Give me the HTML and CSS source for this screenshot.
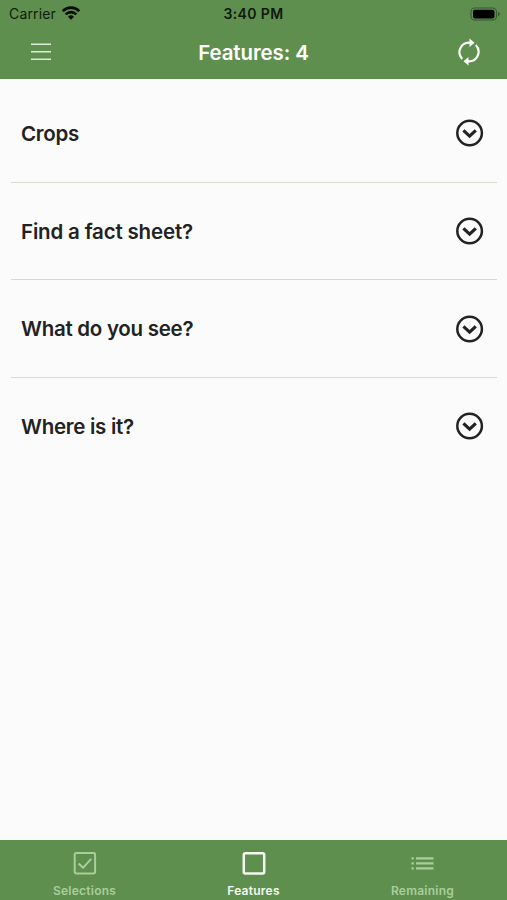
FILE: index.html
```html
<!DOCTYPE html>
<html lang="en">
<head>
<meta charset="utf-8">
<title>Features</title>
<link rel="stylesheet" href="styles.css">
</head>
<body>
<div class="app">
  <header class="header">
    <div class="status">
      <div class="carrier"><span class="carrier-name">Carrier</span>
        <svg class="wifi" width="20" height="14" viewBox="0 0 20 14" fill="none" stroke="#050a04" stroke-width="2.7">
          <path d="M1.7 5.1a11.8 11.8 0 0 1 16.6 0M4.7 8.4a7.5 7.5 0 0 1 10.6 0"/>
          <path d="M7 10.7a4.3 4.3 0 0 1 6 0L10 13.8z" fill="#050a04" stroke="none"/>
        </svg>
      </div>
      <div class="clock">3:40 PM</div>
      <svg class="battery" width="30" height="14" viewBox="0 0 30 14">
        <rect x="1" y="1" width="25.5" height="12" rx="3.8" fill="none" stroke="#36592d" stroke-width="1.1"/>
        <rect x="3" y="2.8" width="21.5" height="8.6" rx="2" fill="#000"/>
        <path d="M28 5v4.2q1.9-.7 1.9-2.1T28 5z" fill="#36592d"/>
      </svg>
    </div>
    <div class="nav">
      <svg class="menu" width="20" height="18" viewBox="0 0 20 18" stroke="#dcebd4" stroke-width="1.6"><path d="M0 1.3h20M0 8.8h20M0 16.2h20"/></svg>
      <h1 class="title">Features: 4</h1>
      <svg class="sync" width="22" height="28" viewBox="0 0 22 28" fill="none" stroke="#fff" stroke-width="2.1">
        <path d="M4.2 20.9A9.6 9.6 0 0 1 11 4.6h2M17.8 7.1A9.6 9.6 0 0 1 11 23.4H9"/>
        <path d="M11.5.4 16.5 4.7 11.5 9zM10.5 19 5.5 23.3 10.5 27.6z" fill="#fff" stroke="none"/>
      </svg>
    </div>
  </header>
  <main class="list">
    <div class="row"><span class="label">Crops</span><svg class="chev" width="28" height="28" viewBox="0 0 28 28"><circle cx="13.6" cy="14" r="12.3"/><path d="m7.4 11.4 6.2 5.7 6.2-5.7"/></svg></div>
    <div class="row"><span class="label find">Find a fact sheet?</span><svg class="chev" width="28" height="28" viewBox="0 0 28 28"><circle cx="13.6" cy="14" r="12.3"/><path d="m7.4 11.4 6.2 5.7 6.2-5.7"/></svg></div>
    <div class="row"><span class="label">What do you see?</span><svg class="chev" width="28" height="28" viewBox="0 0 28 28"><circle cx="13.6" cy="14" r="12.3"/><path d="m7.4 11.4 6.2 5.7 6.2-5.7"/></svg></div>
    <div class="row"><span class="label">Where is it?</span><svg class="chev" width="28" height="28" viewBox="0 0 28 28"><circle cx="13.6" cy="14" r="12.3"/><path d="m7.4 11.4 6.2 5.7 6.2-5.7"/></svg></div>
  </main>
  <nav class="tabs">
    <div class="tab"><svg width="24" height="24" viewBox="0 0 24 24" fill="none" stroke="currentColor" stroke-width="2"><rect x="1.7" y="2.1" width="20.4" height="20.4" rx="1.7"/><path d="m5.6 12.5 4.4 4.3 8.2-9" stroke-width="2"/></svg><span>Selections</span></div>
    <div class="tab active"><svg width="24" height="24" viewBox="0 0 24 24" fill="none" stroke="currentColor" stroke-width="2.5"><rect x="1.8" y="2.2" width="20.4" height="20.4" rx="1.5"/></svg><span>Features</span></div>
    <div class="tab"><svg width="24" height="24" viewBox="0 0 24 24" fill="none" stroke="currentColor" stroke-width="2.3"><path d="M.5 7.3h2.3M5 7.3h17.5M.5 12.3h2.3M5 12.3h17.5M.5 17.3h2.3M5 17.3h17.5"/></svg><span>Remaining</span></div>
  </nav>
</div>
</body>
</html>
```
FILE: styles.css
```css
* { box-sizing: border-box; }
body { margin: 0; font-family: Inter, "Liberation Sans", sans-serif; background: #fbfbfb; color: #222; }
.app { height: 900px; display: flex; flex-direction: column; }
svg { display: block; flex: none; }
.header { height: 79px; background: #5f8f4e; }
.status { height: 27px; padding: 0 7px 0 7px; display: grid; grid-template-columns: 1fr auto 1fr; align-items: center; color: #10190d; }
.carrier { padding-left: 2px; display: flex; align-items: center; gap: 5px; font-size: 14px; letter-spacing: 0.15px; }
.wifi { margin-top: -2px; }
.clock { font-size: 14px; font-weight: 600; letter-spacing: 0.4px; }
.battery { justify-self: end; }
.nav { height: 52px; padding: 0 27px 2px; display: grid; grid-template-columns: 1fr auto 1fr; align-items: center; color: #fff; }
.menu { margin: -1px 0 0 4px; }
.title { margin: 0; font-size: 20.5px; font-weight: 600; line-height: 26px; letter-spacing: -0.1px; padding-top: 1px; }
.sync { justify-self: end; }
.list { flex: 1; padding: 6px 10px 0 11px; }
.row { height: 97.7px; padding: 0 13px 0 10px; display: flex; align-items: center; justify-content: space-between; border-bottom: 1px solid #d9dacd; }
.row:last-child { height: 96.5px; border-bottom: 0; }
.label { padding-top: 1px; font-size: 20.5px; font-weight: 600; line-height: 28px; letter-spacing: -0.27px; }
.find { letter-spacing: -0.17px; }
.chev { fill: none; stroke: #222; stroke-width: 2.5; }
.chev path { stroke-width: 3.2; }
.tabs { height: 60px; background: #5f8f4e; display: grid; grid-template-columns: repeat(3, 1fr); }
.tab { padding-top: 11px; display: flex; flex-direction: column; align-items: center; color: #a8ce9c; font-size: 12px; font-weight: 600; line-height: 16px; letter-spacing: 0.25px; }
.tab span { margin-top: 8px; }
.tab.active { color: #f3faef; }
```
